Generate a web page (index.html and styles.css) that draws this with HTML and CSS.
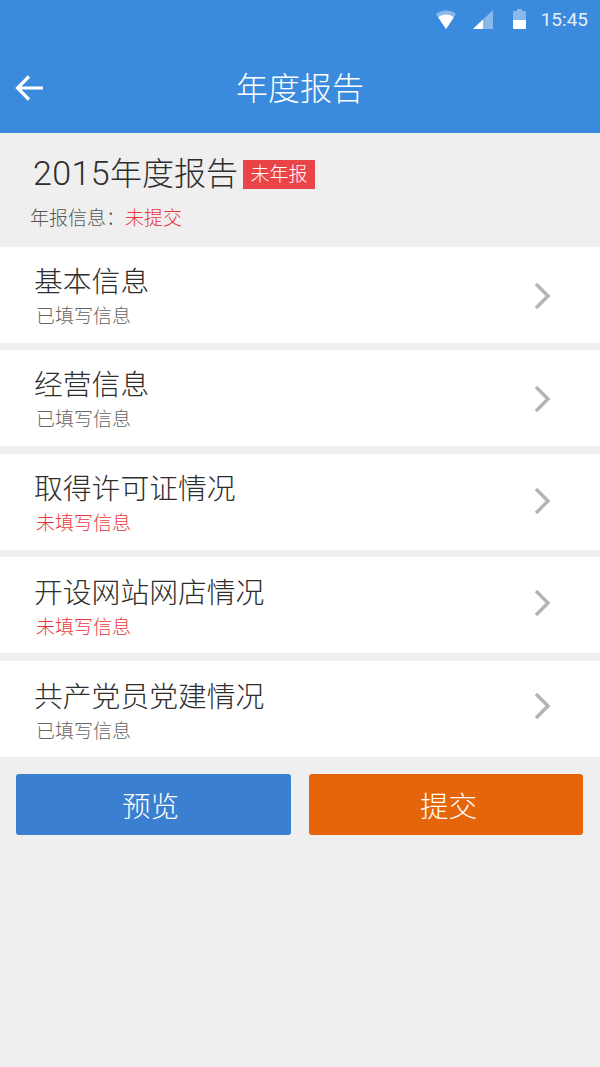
FILE: index.html
```html
<!DOCTYPE html>
<html lang="zh-CN">
<head>
  <meta charset="UTF-8">
  <title>年度报告</title>
  <link rel="stylesheet" href="styles.css">
</head>
<body>

  <header class="top-bar">
    <div class="status-bar">
      <svg class="icon-wifi" width="20" height="19" viewBox="0 0 20 19">
        <path d="M0 4 C5 -0.8 15 -0.8 20 4 L10 19 Z" fill="#fff" fill-opacity="0.4"/>
        <path d="M2.3 7.4 C6.5 3.6 13.5 3.6 17.7 7.4 L10 19 Z" fill="#fff"/>
      </svg>
      <svg class="icon-signal" width="20" height="19" viewBox="0 0 20 19">
        <path d="M20 0 V19 H0 Z" fill="#fff" fill-opacity="0.4"/>
        <path d="M10 9.5 V19 H0 Z" fill="#fff"/>
      </svg>
      <svg class="icon-battery" width="13" height="20" viewBox="0 0 13 20">
        <path d="M4 0 H9 V2 H12 Q13 2 13 3 V11 H0 V3 Q0 2 1 2 H4 Z" fill="#fff" fill-opacity="0.4"/>
        <path d="M0 11 H13 V19 Q13 20 12 20 H1 Q0 20 0 19 Z" fill="#fff"/>
      </svg>
      <span class="clock">15:45</span>
    </div>
    <div class="nav-bar">
      <svg class="back" width="30" height="28" viewBox="0 0 30 28">
        <path d="M28 14 H3 M14 2.5 L2.5 14 L14 25.5" fill="none" stroke="#fff" stroke-width="3.2"/>
      </svg>
      <h1>年度报告</h1>
    </div>
  </header>

  <section class="report-head">
    <div class="report-title">
      <h2><span class="year">2015</span>年度报告</h2>
      <span class="badge">未年报</span>
    </div>
    <p class="report-info">年报信息：<span class="red">未提交</span></p>
  </section>

  <ul class="rows">
    <li class="row">
      <div>
        <div class="row-title">基本信息</div>
        <div class="row-sub">已填写信息</div>
      </div>
      <svg class="chevron" width="20" height="28" viewBox="0 0 20 28"><path d="M3 2 L15 14 L3 26" fill="none" stroke="#b4b4b4" stroke-width="3.4"/></svg>
    </li>
    <li class="row">
      <div>
        <div class="row-title">经营信息</div>
        <div class="row-sub">已填写信息</div>
      </div>
      <svg class="chevron" width="20" height="28" viewBox="0 0 20 28"><path d="M3 2 L15 14 L3 26" fill="none" stroke="#b4b4b4" stroke-width="3.4"/></svg>
    </li>
    <li class="row">
      <div>
        <div class="row-title">取得许可证情况</div>
        <div class="row-sub red">未填写信息</div>
      </div>
      <svg class="chevron" width="20" height="28" viewBox="0 0 20 28"><path d="M3 2 L15 14 L3 26" fill="none" stroke="#b4b4b4" stroke-width="3.4"/></svg>
    </li>
    <li class="row">
      <div>
        <div class="row-title">开设网站网店情况</div>
        <div class="row-sub red">未填写信息</div>
      </div>
      <svg class="chevron" width="20" height="28" viewBox="0 0 20 28"><path d="M3 2 L15 14 L3 26" fill="none" stroke="#b4b4b4" stroke-width="3.4"/></svg>
    </li>
    <li class="row">
      <div>
        <div class="row-title">共产党员党建情况</div>
        <div class="row-sub">已填写信息</div>
      </div>
      <svg class="chevron" width="20" height="28" viewBox="0 0 20 28"><path d="M3 2 L15 14 L3 26" fill="none" stroke="#b4b4b4" stroke-width="3.4"/></svg>
    </li>
  </ul>

  <div class="actions">
    <button class="btn btn-blue">预览</button>
    <button class="btn btn-orange">提交</button>
  </div>

</body>
</html>
```

FILE: styles.css
```css
body {
  margin: 0;
  height: 1067px;
  overflow: hidden;
  background-color: #efefef;
  font-family: Roboto, "Noto Sans CJK SC", sans-serif;
  font-weight: 300;
  color: #2e2e2e;
}

h1, h2, p, ul {
  margin: 0;
  padding: 0;
  font-weight: 300;
}

.top-bar {
  height: 133px;
  background-color: #3a8add;
  color: #fff;
}

.status-bar {
  height: 38px;
  display: flex;
  justify-content: flex-end;
  align-items: center;
  padding-right: 12px;
}

.icon-wifi {
  margin-right: 17px;
}

.icon-signal {
  margin-right: 20px;
}

.icon-battery {
  margin-right: 15px;
}

.clock {
  font-size: 19px;
  font-weight: 400;
  color: #e6f0fb;
}

.nav-bar {
  height: 89px;
  padding-top: 6px;
  position: relative;
  display: flex;
  justify-content: center;
  align-items: center;
}

.nav-bar h1 {
  font-size: 32px;
  line-height: 1;
  color: #fff;
}

.back {
  position: absolute;
  left: 15px;
  top: 36px;
}

.report-head {
  height: 113.8px;
  box-sizing: border-box;
  padding: 21px 0 0 30px;
}

.report-title {
  display: flex;
  align-items: center;
  margin-left: 3px;
}

.report-title h2 {
  font-size: 32px;
  line-height: 38px;
}

.year {
  font-size: 34px;
  letter-spacing: 0.4px;
}

.badge {
  margin: 1px 0 0 5px;
  width: 72px;
  height: 29px;
  line-height: 29px;
  text-align: center;
  font-size: 19px;
  color: #fff;
  background-color: #ea4448;
}

.report-info {
  margin-top: 13px;
  font-size: 19px;
  line-height: 26px;
  color: #555;
}

.red {
  color: #e8383c !important;
}

.rows {
  list-style: none;
  display: flex;
  flex-direction: column;
  gap: 7.5px;
}

.row {
  height: 96px;
  box-sizing: border-box;
  padding: 16px 47px 0 34px;
  background-color: #fff;
  display: flex;
  justify-content: space-between;
}

.row-title {
  font-size: 28.8px;
  line-height: 38px;
}

.row-sub {
  margin-top: 3px;
  margin-left: 2px;
  font-size: 19px;
  line-height: 26px;
  color: #666;
}

/* arrows drift up a little row by row */
.chevron {
  margin-top: 19px;
}

.row:nth-child(3) .chevron {
  margin-top: 17px;
}

.row:nth-child(4) {
  padding-top: 17px;
}

.row:nth-child(4) .chevron {
  margin-top: 14.5px;
}

.row:nth-child(5) {
  padding-top: 17.5px;
}

.row:nth-child(5) .chevron {
  margin-top: 13.5px;
}

.actions {
  display: flex;
  justify-content: space-between;
  padding: 17px 17px 0 16px;
}

.btn {
  height: 61px;
  border: none;
  border-radius: 3px;
  font-family: inherit;
  font-weight: 300;
  font-size: 28.6px;
  color: #fff;
}

.btn-blue {
  width: 275px;
  background-color: #3a7fd0;
  padding: 0 6px 0 0;
}

.btn-orange {
  width: 274px;
  background-color: #e5660a;
  padding: 0 0 0 5px;
}
```
